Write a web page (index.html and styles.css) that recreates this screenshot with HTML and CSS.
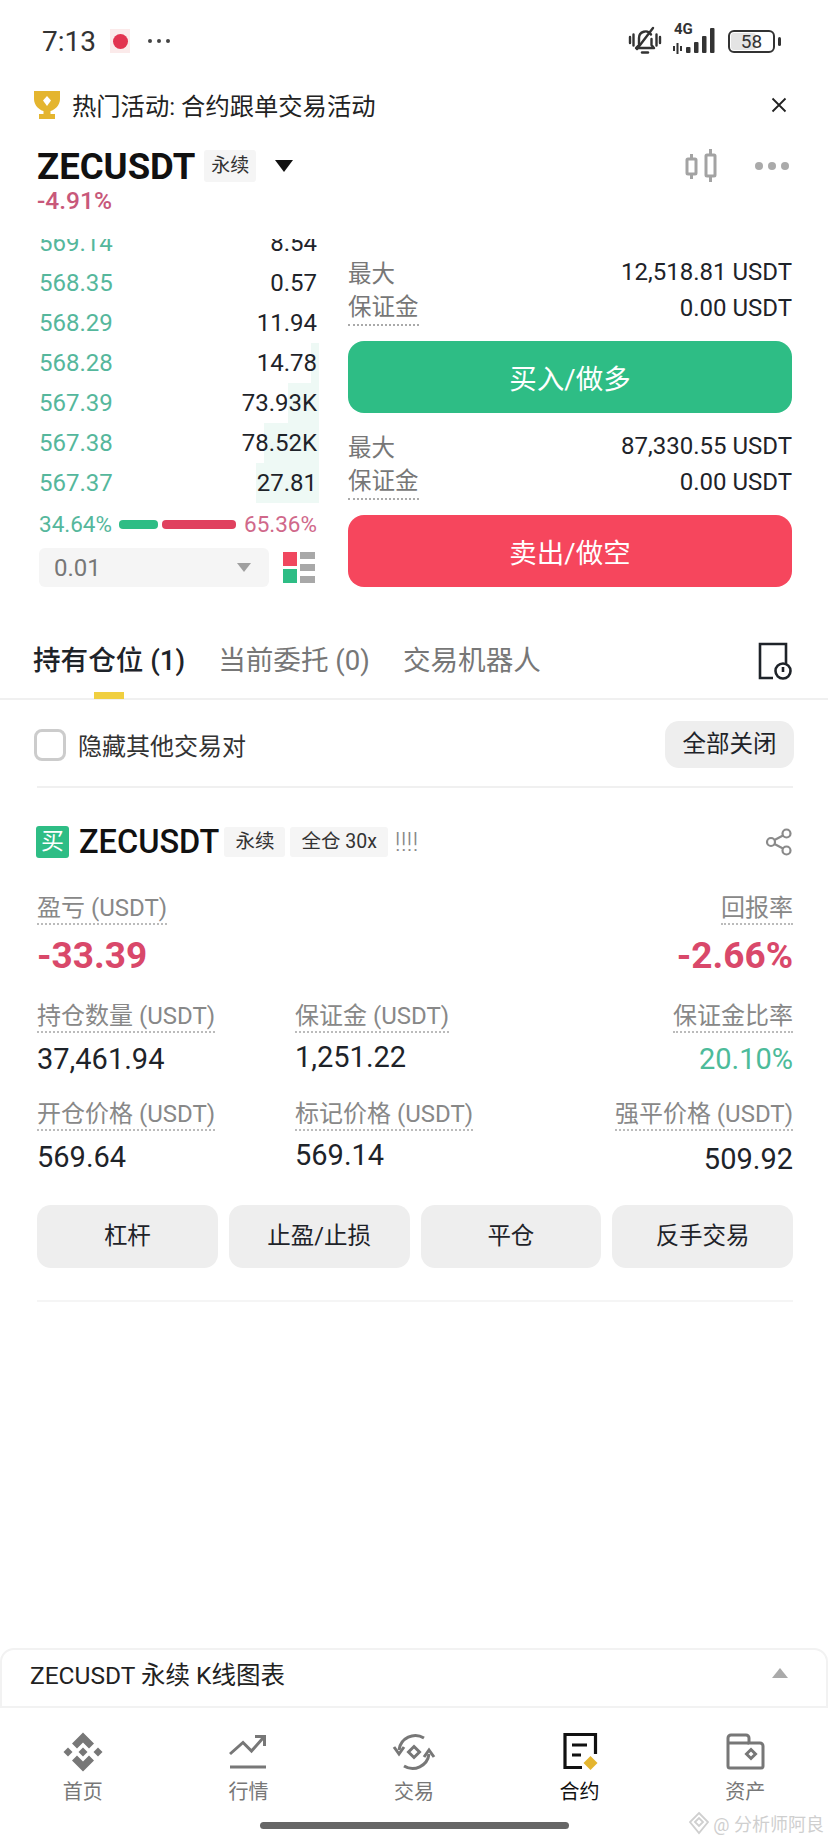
FILE: index.html
```html
<!DOCTYPE html>
<html lang="zh-CN">
<head>
  <meta charset="UTF-8" />
  <meta name="viewport" content="width=device-width, initial-scale=1.0"/>
  <title>ZECUSDT 永续</title>
  <link rel="stylesheet" href="styles.css">
</head>
<body>
  <div class="status-bar">
    <div class="status-left">
      <span class="time">7:13</span>
      <span class="app-dot"><span class="app-dot-inner"></span></span>
      <span class="status-more"><i></i><i></i><i></i></span>
    </div>
    <div class="status-right">
      <svg class="bell" width="34" height="32" viewBox="0 0 34 32" fill="none" stroke="#333" stroke-width="2.4" stroke-linecap="round" stroke-linejoin="round">
        <path d="M11 20V13a6.500 6.500 0 0 1 12-3.500M23.500 14v6l2.500 3H8l3-3"/>
        <path d="M14 27.500h6"/>
        <path d="M9 24L25 3"/>
        <path d="M2 12v6M5.500 9.500v11M28.500 9.500v11M32 12v6"/>
      </svg>
      <div class="signal">
        <span class="net">4G</span>
        <svg width="46" height="28" viewBox="0 0 46 28" fill="#333">
          <rect x="0" y="19" width="2" height="5"/>
          <rect x="3.500" y="16" width="2" height="11"/>
          <rect x="7" y="19" width="2" height="5"/>
          <rect x="13" y="20" width="4.500" height="6" rx="1"/>
          <rect x="21" y="15" width="4.500" height="11" rx="1"/>
          <rect x="29" y="9" width="4.500" height="17" rx="1"/>
          <rect x="37" y="1" width="4.500" height="25" rx="1"/>
        </svg>
      </div>
      <div class="battery">
        <div class="battery-body"><span class="battery-level"></span><span class="battery-text">58</span></div>
        <span class="battery-tip"></span>
      </div>
    </div>
  </div>

  <div class="banner">
    <svg width="28" height="30" viewBox="0 0 28 30">
      <path fill="#e4b52f" d="M1 1h26v8c0 6-5 11-9.500 12v3H22v5H6v-5h4.500v-3C6 20 1 15 1 9z"/>
      <path fill="#fff" d="M14 6l4 4.500-4 5.500-4-5.500z"/>
    </svg>
    <span class="banner-text">热门活动: 合约跟单交易活动</span>
    <svg class="banner-close" width="16" height="16" viewBox="0 0 16 16" stroke="#222" stroke-width="1.800">
      <path d="M1.500 1.500l13 13M14.500 1.500l-13 13"/>
    </svg>
  </div>

  <div class="symbol-head">
    <div class="symbol-left">
      <div class="symbol-line">
        <span class="symbol-name">ZECUSDT</span>
        <span class="tag symbol-tag">永续</span>
        <span class="symbol-caret"></span>
      </div>
      <div class="symbol-change">-4.91%</div>
    </div>
    <div class="symbol-tools">
      <svg width="32" height="34" viewBox="0 0 32 34" fill="none" stroke="#a3a3a3" stroke-width="3">
        <rect x="2" y="10" width="9" height="15" rx="1"/>
        <rect x="21" y="6" width="9" height="21" rx="1"/>
        <path d="M6.500 5v5M6.500 25v5M25.500 0v6M25.500 27v6"/>
      </svg>
      <span class="more-dots"><i></i><i></i><i></i></span>
    </div>
  </div>

  <div class="trade">
    <div class="book">
      <div class="book-rows">
        <div class="book-row first-row"><span class="price">569.14</span><span class="size">8.54</span></div>
        <div class="book-row"><span class="price">568.35</span><span class="size">0.57</span></div>
        <div class="book-row"><span class="price">568.29</span><span class="size">11.94</span></div>
        <div class="book-row"><span class="depth" style="width: 8px"></span><span class="price">568.28</span><span class="size">14.78</span></div>
        <div class="book-row"><span class="depth" style="width: 31px"></span><span class="price">567.39</span><span class="size">73.93K</span></div>
        <div class="book-row"><span class="depth" style="width: 55px"></span><span class="price">567.38</span><span class="size">78.52K</span></div>
        <div class="book-row"><span class="depth" style="width: 63px"></span><span class="price">567.37</span><span class="size">27.81</span></div>
      </div>
      <div class="ratio">
        <span class="ratio-buy">34.64%</span>
        <span class="ratio-bar bar-buy"></span>
        <span class="ratio-bar bar-sell"></span>
        <span class="ratio-sell">65.36%</span>
      </div>
      <div class="book-controls">
        <div class="precision"><span>0.01</span><span class="precision-caret"></span></div>
        <svg class="book-layout" width="32" height="32" viewBox="0 0 32 32">
          <rect x="0" y="0" width="14" height="14" fill="#f0475f"/>
          <rect x="0" y="17" width="14" height="14" fill="#2ebd85"/>
          <rect x="17" y="0" width="15" height="7" fill="#a8a8a8"/>
          <rect x="17" y="12" width="15" height="7" fill="#a8a8a8"/>
          <rect x="17" y="24" width="15" height="7" fill="#a8a8a8"/>
        </svg>
      </div>
    </div>

    <div class="order">
      <div class="order-info">
        <div class="info-row"><span>最大</span><span class="info-value">12,518.81 USDT</span></div>
        <div class="info-row"><span class="dotted">保证金</span><span class="info-value">0.00 USDT</span></div>
      </div>
      <div class="order-btn btn-buy">买入/做多</div>
      <div class="order-info">
        <div class="info-row"><span>最大</span><span class="info-value">87,330.55 USDT</span></div>
        <div class="info-row"><span class="dotted">保证金</span><span class="info-value">0.00 USDT</span></div>
      </div>
      <div class="order-btn btn-sell">卖出/做空</div>
    </div>
  </div>

  <div class="tabs">
    <span class="tab tab-active">持有仓位 (1)</span>
    <span class="tab">当前委托 (0)</span>
    <span class="tab">交易机器人</span>
    <svg class="tabs-icon" width="34" height="38" viewBox="0 0 34 38" fill="none" stroke="#1e2329" stroke-width="2.600">
      <path d="M15 36H2V2h26v20"/>
      <circle cx="25" cy="29" r="7.500"/>
      <path d="M25 25v5"/>
    </svg>
  </div>

  <div class="hide-row">
    <label class="hide-label"><span class="checkbox"></span>隐藏其他交易对</label>
    <span class="close-all">全部关闭</span>
  </div>
  <div class="divider"></div>

  <div class="position">
    <div class="pos-head">
      <span class="side-badge">买</span>
      <span class="pos-name">ZECUSDT</span>
      <span class="tag pos-tag">永续</span>
      <span class="tag pos-tag">全仓 30x</span>
      <span class="pos-warn">!!!!</span>
      <svg class="pos-share" width="28" height="28" viewBox="0 0 28 28" fill="none" stroke="#8a8a8a" stroke-width="2.200">
        <circle cx="21.500" cy="5.500" r="4"/>
        <circle cx="6" cy="14" r="4"/>
        <circle cx="21.500" cy="22.500" r="4"/>
        <path d="M9.500 12l8.500-4.500M9.500 16l8.500 4.500"/>
      </svg>
    </div>

    <div class="pnl">
      <div class="pnl-col">
        <span class="stat-label">盈亏 (USDT)</span>
        <span class="pnl-value">-33.39</span>
      </div>
      <div class="pnl-col pnl-right">
        <span class="stat-label">回报率</span>
        <span class="pnl-value">-2.66%</span>
      </div>
    </div>

    <div class="stats">
      <div class="stat">
        <span class="stat-label">持仓数量 (USDT)</span>
        <span class="stat-value">37,461.94</span>
      </div>
      <div class="stat">
        <span class="stat-label">保证金 (USDT)</span>
        <span class="stat-value value-high">1,251.22</span>
      </div>
      <div class="stat stat-right">
        <span class="stat-label">保证金比率</span>
        <span class="stat-value stat-green">20.10%</span>
      </div>
      <div class="stat">
        <span class="stat-label">开仓价格 (USDT)</span>
        <span class="stat-value">569.64</span>
      </div>
      <div class="stat">
        <span class="stat-label">标记价格 (USDT)</span>
        <span class="stat-value value-high">569.14</span>
      </div>
      <div class="stat stat-right">
        <span class="stat-label">强平价格 (USDT)</span>
        <span class="stat-value value-low">509.92</span>
      </div>
    </div>

    <div class="pos-actions">
      <span class="action">杠杆</span>
      <span class="action">止盈/止损</span>
      <span class="action">平仓</span>
      <span class="action">反手交易</span>
    </div>
  </div>
  <div class="divider divider-light"></div>

  <div class="spacer"></div>

  <div class="chart-panel">
    <span>ZECUSDT 永续 K线图表</span>
    <span class="chart-caret"></span>
  </div>

  <nav class="nav">
    <div class="nav-item">
      <svg width="44" height="44" viewBox="0 0 44 44" fill="#777">
        <polygon points="22,2.500 33,13.500 28,18.500 22,12.500 16,18.500 11,13.500"/>
        <polygon points="22,41.500 33,30.500 28,25.500 22,31.500 16,25.500 11,30.500"/>
        <polygon points="22,17.500 26.500,22 22,26.500 17.500,22"/>
        <polygon points="7,17.500 11.500,22 7,26.500 2.500,22"/>
        <polygon points="37,17.500 41.500,22 37,26.500 32.500,22"/>
      </svg>
      <span>首页</span>
    </div>
    <div class="nav-item">
      <svg width="44" height="44" viewBox="0 0 44 44" fill="none" stroke="#777" stroke-width="3">
        <path d="M4 24L17 12.500l8.500 8.500L37 8"/>
        <path d="M29 6.500h9.500V16"/>
        <path d="M4 37h36"/>
      </svg>
      <span>行情</span>
    </div>
    <div class="nav-item">
      <svg width="44" height="44" viewBox="0 0 44 44" fill="none" stroke="#777" stroke-width="3">
        <path d="M32 8A16.500 16.500 0 0 0 7 20"/>
        <path d="M2 17l5 7 5-7"/>
        <path d="M12 36a16.500 16.500 0 0 0 25-12"/>
        <path d="M32 27l5-7 5 7"/>
        <polygon points="22,16.500 27.500,22 22,27.500 16.500,22"/>
      </svg>
      <span>交易</span>
    </div>
    <div class="nav-item nav-active">
      <svg width="44" height="44" viewBox="0 0 44 44" fill="none" stroke="#111" stroke-width="3.200">
        <path d="M37.500 24V4.500H7v33h17"/>
        <path d="M14 15h15M14 25h9"/>
        <polygon points="32.500,26 39.500,33 32.500,40 25.500,33" fill="#e4b52f" stroke="none"/>
      </svg>
      <span>合约</span>
    </div>
    <div class="nav-item">
      <svg width="44" height="44" viewBox="0 0 44 44" fill="none" stroke="#777" stroke-width="3">
        <path d="M5 13V8a3 3 0 0 1 3-3h15a3 3 0 0 1 3 3v5h11a3 3 0 0 1 3 3v20a2 2 0 0 1-2 2H7a2 2 0 0 1-2-2z"/>
        <path d="M5 13h21"/>
        <polygon points="28,19.500 32.500,24 28,28.500 23.500,24"/>
      </svg>
      <span>资产</span>
    </div>
  </nav>
  <div class="home-bar"></div>

  <div class="watermark">
    <svg width="22" height="24" viewBox="0 0 22 24" fill="none" stroke="#cfcfcf" stroke-width="1.800">
      <path d="M11 2l9 9-9 11-9-11z"/>
      <path d="M7 11l4-4 4 4-4 4z"/>
    </svg>
    <span>@ 分析师阿良</span>
  </div>
</body>
</html>
```

FILE: styles.css
```css
* {
  box-sizing: border-box;
}

html,
body {
  margin: 0;
  height: 100%;
}

body {
  position: relative;
  display: flex;
  flex-direction: column;
  height: 1841px;
  overflow: hidden;
  background-color: #fff;
  color: #1e2329;
  font-family: Roboto, "Noto Sans CJK SC", sans-serif;
}

/* status bar */
.status-bar {
  height: 82px;
  padding: 0 47px 0 42px;
  display: flex;
  justify-content: space-between;
  align-items: center;
}

.status-left,
.status-right {
  display: flex;
  align-items: center;
}

.time {
  font-size: 28px;
  color: #333;
}

.app-dot {
  width: 20px;
  height: 24px;
  margin-left: 14px;
  background-color: #fbeaea;
  display: flex;
  align-items: center;
  justify-content: center;
}

.app-dot-inner {
  width: 15px;
  height: 15px;
  border-radius: 50%;
  background-color: #e2334f;
}

.status-more {
  margin-left: 18px;
  display: flex;
  gap: 5px;
}

.status-more i {
  width: 4px;
  height: 4px;
  border-radius: 50%;
  background-color: #444;
}

.signal {
  position: relative;
  width: 46px;
  height: 28px;
  margin-left: 11px;
}

.net {
  position: absolute;
  left: 1px;
  top: -5px;
  font-size: 15px;
  line-height: 15px;
  font-weight: 700;
  color: #333;
}

.battery {
  margin-left: 9px;
  display: flex;
  align-items: center;
  gap: 3px;
}

.battery-body {
  position: relative;
  width: 47px;
  height: 23px;
  border: 2px solid #333;
  border-radius: 6px;
  display: flex;
  align-items: center;
  justify-content: center;
}

.battery-level {
  position: absolute;
  left: 1px;
  top: 1px;
  bottom: 1px;
  width: 58%;
  border-radius: 3px;
  background-color: #e4e4e4;
}

.battery-text {
  position: relative;
  font-size: 19px;
  color: #333;
}

.battery-tip {
  width: 3px;
  height: 9px;
  border-radius: 2px;
  background-color: #333;
}

/* banner */
.banner {
  height: 45px;
  padding: 0 41px 0 33px;
  display: flex;
  align-items: center;
}

.banner-text {
  margin-left: 11px;
  font-size: 24.300px;
  color: #222;
}

.banner-close {
  margin-left: auto;
}

/* symbol header */
.symbol-head {
  height: 112px;
  padding: 21px 39px 0 37px;
  display: flex;
  justify-content: space-between;
  align-items: flex-start;
}

.symbol-line {
  display: flex;
  align-items: center;
  height: 36px;
}

.symbol-name {
  font-size: 36.500px;
  font-weight: 700;
  color: #111;
}

.tag {
  background-color: #f5f5f5;
  border-radius: 3px;
  color: #333;
}

.symbol-tag {
  margin-left: 9px;
  width: 52px;
  height: 32px;
  line-height: 32px;
  text-align: center;
  font-size: 19px;
}

.symbol-caret {
  margin-left: 19px;
  border-left: 9px solid transparent;
  border-right: 9px solid transparent;
  border-top: 12px solid #111;
}

.symbol-change {
  margin-top: 4px;
  font-size: 24.500px;
  line-height: 26px;
  font-weight: 500;
  color: #c8587a;
}

.symbol-tools {
  display: flex;
  align-items: center;
  gap: 38px;
  height: 36px;
}

.more-dots {
  display: flex;
  gap: 5px;
}

.more-dots i {
  width: 8px;
  height: 8px;
  border-radius: 50%;
  background-color: #aaa;
}

/* order book + order buttons */
.trade {
  height: 348px;
  padding: 0 36px 0 39px;
  display: flex;
  justify-content: space-between;
}

.book {
  width: 280px;
}

.book-rows {
  height: 264px;
  overflow: hidden;
}

.book-row {
  position: relative;
  height: 40px;
  display: flex;
  justify-content: space-between;
  align-items: center;
  font-size: 24px;
}

.first-row {
  margin-top: -16px;
}

.depth {
  position: absolute;
  right: 0;
  top: 0;
  bottom: 0;
  background-color: #eef9f5;
}

.price,
.size {
  position: relative;
}

.price {
  color: #55b79c;
}

.size {
  color: #1e2329;
  margin-right: 2px;
}

.ratio {
  height: 42px;
  display: flex;
  align-items: center;
  font-size: 22.500px;
}

.ratio-buy {
  color: #55b79c;
  margin-right: 7px;
}

.ratio-sell {
  color: #d0688a;
  margin-left: 8px;
}

.ratio-bar {
  height: 9px;
  border-radius: 4px;
}

.bar-buy {
  width: 39px;
  background-color: #2ebd85;
}

.bar-sell {
  width: 74px;
  margin-left: 4px;
  background-color: #e0415f;
}

.book-controls {
  margin-top: 3px;
  display: flex;
  justify-content: space-between;
  align-items: center;
}

.book-layout {
  margin-right: 4px;
}

.precision {
  width: 230px;
  height: 39px;
  padding: 0 18px 0 15px;
  border-radius: 6px;
  background-color: #f5f5f5;
  display: flex;
  justify-content: space-between;
  align-items: center;
  font-size: 24px;
  color: #777;
}

.precision-caret {
  border-left: 7px solid transparent;
  border-right: 7px solid transparent;
  border-top: 9px solid #a0a0a0;
}

.order {
  width: 444px;
  margin-top: -4px;
  display: flex;
  flex-direction: column;
}

.order-info {
  padding-top: 19px;
  padding-bottom: 15px;
}

.info-row {
  height: 36px;
  display: flex;
  justify-content: space-between;
  align-items: center;
  font-size: 23.500px;
  color: #777;
}

.info-value {
  font-size: 24px;
  color: #1e2329;
}

.dotted {
  border-bottom: 2px dotted #aaa;
  line-height: 33px;
}

.order-btn {
  height: 72px;
  border-radius: 16px;
  display: flex;
  justify-content: center;
  align-items: center;
  color: #fff;
  font-size: 27.500px;
}

.order-btn + .order-info {
  padding-top: 15px;
}

.btn-buy {
  background-color: #2ebd85;
}

.btn-sell {
  background-color: #f6465d;
}

/* tabs */
.tabs {
  position: relative;
  height: 113px;
  padding: 56px 36px 0 33px;
  display: flex;
  align-items: flex-start;
  gap: 33px;
  border-bottom: 2px solid #f0f0f0;
}

.tab {
  position: relative;
  height: 36px;
  line-height: 36px;
  font-size: 27.600px;
  color: #777;
}

.tab-active {
  color: #1e2329;
  font-weight: 500;
}

.tab-active::after {
  content: "";
  position: absolute;
  left: 61px;
  top: 49px;
  width: 30px;
  height: 7px;
  background-color: #f0cf40;
}

.tabs-icon {
  margin-left: auto;
  margin-top: -1px;
}

.hide-row {
  height: 86px;
  padding: 3px 34px 0;
  display: flex;
  justify-content: space-between;
  align-items: center;
}

.hide-label {
  display: flex;
  align-items: center;
  gap: 12px;
  font-size: 24px;
  color: #333;
}

.checkbox {
  width: 32px;
  height: 32px;
  border: 3px solid #ccc;
  border-radius: 8px;
}

.close-all {
  width: 129px;
  height: 47px;
  line-height: 47px;
  text-align: center;
  border-radius: 14px;
  background-color: #eee;
  font-size: 23.500px;
}

.divider {
  height: 2px;
  margin: 0 35px 0 37px;
  background-color: #f0f0f0;
}

.divider-light {
  background-color: #f5f5f5;
}

/* position card */
.position {
  padding: 38px 35px 32px 37px;
}

.pos-head {
  height: 32px;
  display: flex;
  align-items: center;
}

.side-badge {
  width: 33px;
  height: 32px;
  margin-left: -1px;
  border-radius: 3px;
  background-color: #2ebd85;
  color: #fff;
  text-align: center;
  line-height: 32px;
  font-size: 23px;
}

.pos-name {
  margin-left: 10px;
  font-size: 32.500px;
  font-weight: 500;
  color: #111;
}

.pos-tag {
  margin-left: 5px;
  height: 30px;
  padding: 0 11px;
  line-height: 30px;
  font-size: 19.500px;
}

.pos-warn {
  margin-left: 7px;
  font-size: 26px;
  font-weight: 300;
  color: #888;
}

.pos-share {
  margin-left: auto;
}

.pnl {
  margin-top: 35px;
  display: flex;
  justify-content: space-between;
}

.pnl-col {
  display: flex;
  flex-direction: column;
  align-items: flex-start;
}

.pnl-right {
  align-items: flex-end;
}

.stat-label {
  display: inline-block;
  height: 32px;
  line-height: 30px;
  border-bottom: 2px dotted #bbb;
  font-size: 24px;
  color: #888;
}

.pnl-value {
  margin-top: 9px;
  font-size: 37px;
  line-height: 44px;
  font-weight: 700;
  color: #d9486a;
}

.stats {
  margin-top: 23px;
  display: grid;
  grid-template-columns: 258px 1fr auto;
  row-gap: 24px;
}

.stat {
  display: flex;
  flex-direction: column;
  align-items: flex-start;
}

.stat-right {
  align-items: flex-end;
}

.stat-value {
  margin-top: 10px;
  font-size: 29px;
  line-height: 32px;
}

.value-high {
  margin-top: 8px;
}

.value-low {
  margin-top: 12px;
}

.stat-green {
  color: #4dbb9a;
}

.pos-actions {
  margin-top: 30px;
  display: grid;
  grid-template-columns: repeat(4, 1fr);
  gap: 11px;
}

.action {
  height: 63px;
  line-height: 63px;
  text-align: center;
  border-radius: 14px;
  background-color: #eee;
  font-size: 23.500px;
}

.spacer {
  flex: 1;
}

/* bottom */
.chart-panel {
  height: 60px;
  padding: 0 38px 10px 28px;
  display: flex;
  justify-content: space-between;
  align-items: center;
  border: 2px solid #f2f2f2;
  border-radius: 14px 14px 0 0;
  font-size: 24.500px;
  color: #222;
}

.chart-caret {
  border-left: 8px solid transparent;
  border-right: 8px solid transparent;
  border-bottom: 10px solid #aaa;
}

.nav {
  padding-top: 22px;
  display: flex;
}

.nav-item {
  flex: 1;
  display: flex;
  flex-direction: column;
  align-items: center;
  gap: 4px;
  font-size: 20px;
  line-height: 28px;
  color: #777;
}

.nav-active {
  color: #111;
}

.home-bar {
  width: 309px;
  height: 7px;
  margin: 16px auto 12px;
  border-radius: 4px;
  background-color: #666;
}

.watermark {
  position: absolute;
  right: 4px;
  bottom: 5px;
  display: flex;
  align-items: center;
  gap: 3px;
  font-size: 18px;
  color: #cfcfcf;
}
```
